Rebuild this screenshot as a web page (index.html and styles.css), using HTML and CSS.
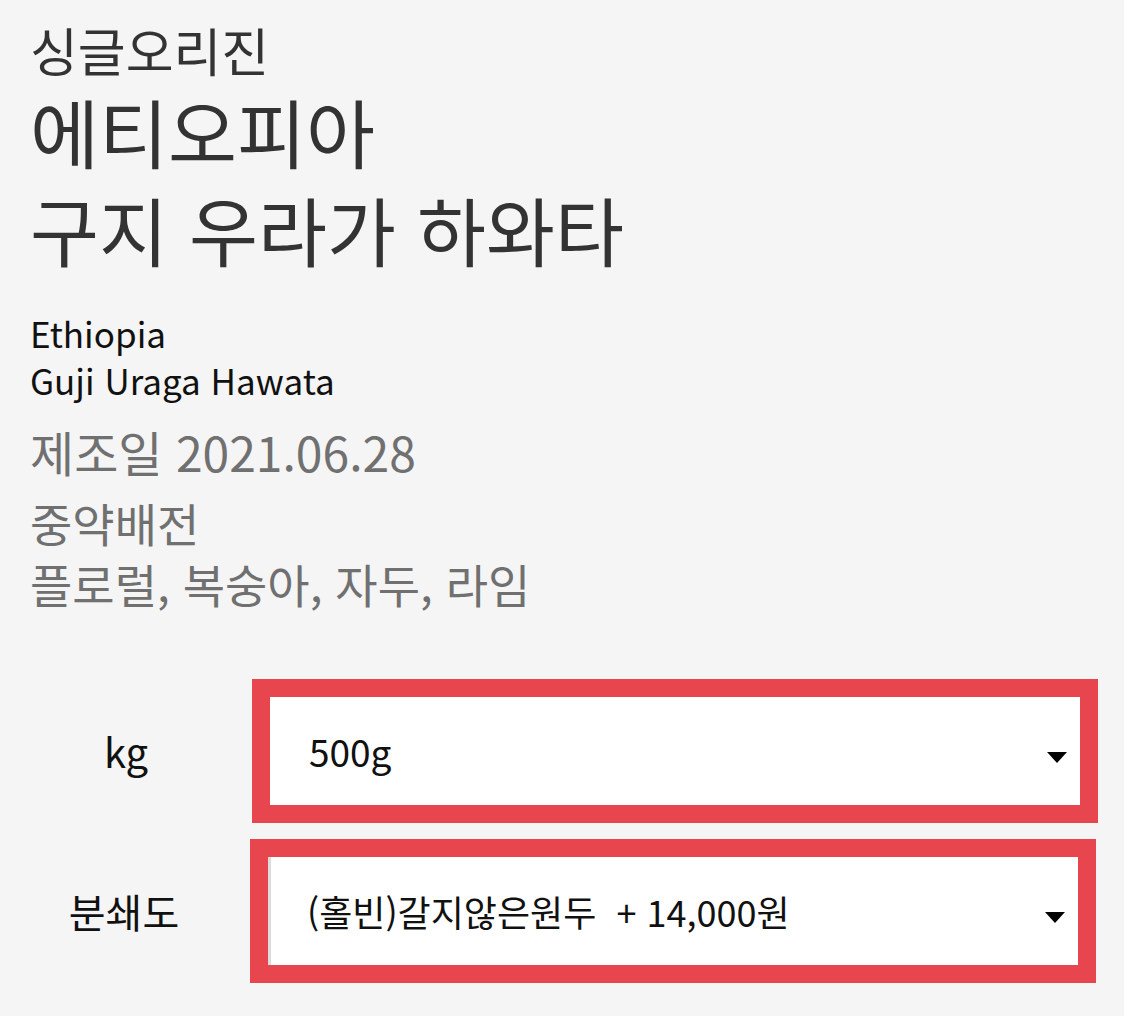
FILE: index.html
```html
<!DOCTYPE html>
<html lang="ko">
<head>
<meta charset="utf-8">
<title>에티오피아 구지 우라가 하와타</title>
<link rel="stylesheet" href="styles.css">
</head>
<body>
<main class="page">
  <section class="info">
    <div class="category">싱글오리진</div>
    <h1 class="title">에티오피아<br>구지 우라가 하와타</h1>
    <div class="eng">Ethiopia<br>Guji Uraga Hawata</div>
    <div class="date">제조일 2021.06.28</div>
    <div class="roast">중약배전<br>플로럴, 복숭아, 자두, 라임</div>
  </section>
  <section class="options">
    <div class="opt-row">
      <div class="opt-label">kg</div>
      <div class="select">
        <span class="select-value">500g</span>
        <span class="caret"></span>
      </div>
    </div>
    <div class="opt-row opt-row-shift">
      <div class="opt-label">분쇄도</div>
      <div class="select select-edge">
        <span class="select-value">(홀빈)갈지않은원두&nbsp;&nbsp;+ 14,000원</span>
        <span class="caret"></span>
      </div>
    </div>
  </section>
</main>
</body>
</html>
```

FILE: styles.css
```css
html, body {
  margin: 0;
  padding: 0;
  background: #f5f5f5;
}

body {
  font-family: "Noto Sans CJK KR", "Noto Sans", sans-serif;
  width: 1124px;
  height: 1016px;
  overflow: hidden;
}

.page {
  display: flex;
  flex-direction: column;
}

.info {
  padding: 18px 0 0 30px;
  display: flex;
  flex-direction: column;
}

.category {
  font-size: 52px;
  line-height: 64px;
  color: #333;
}

.title {
  margin: 0;
  font-weight: 400;
  font-size: 75px;
  line-height: 97.5px;
  color: #333;
}

.eng {
  margin-top: 32px;
  font-size: 35px;
  line-height: 47px;
  color: #111;
}

.date {
  margin-top: 10px;
  font-size: 48px;
  line-height: 76px;
  color: #707070;
}

.roast {
  margin-top: 3px;
  font-size: 46px;
  line-height: 61px;
  color: #707070;
}

.options {
  margin-top: 65px;
  display: flex;
  flex-direction: column;
  gap: 16px;
  padding-right: 26px;
}

.opt-row {
  display: grid;
  grid-template-columns: 252px 1fr;
  align-items: center;
}

.opt-row-shift {
  margin-left: -2px;
  margin-right: 2px;
}

.opt-label {
  text-align: center;
  font-size: 40px;
  color: #111;
}

.select {
  position: relative;
  height: 108px;
  border: 18px solid #e8464f;
  background: #fff;
  display: flex;
  align-items: center;
  padding-left: 39px;
  font-size: 37px;
  color: #111;
}

.select-edge {
  font-size: 36px;
  box-shadow: inset 3px 0 0 #dcdcdc;
}

.select-value {
  white-space: pre;
}

.caret {
  position: absolute;
  right: 13px;
  top: 50%;
  margin-top: 1px;
  width: 0;
  height: 0;
  border-left: 10.5px solid transparent;
  border-right: 10.5px solid transparent;
  border-top: 11px solid #000;
}
```
